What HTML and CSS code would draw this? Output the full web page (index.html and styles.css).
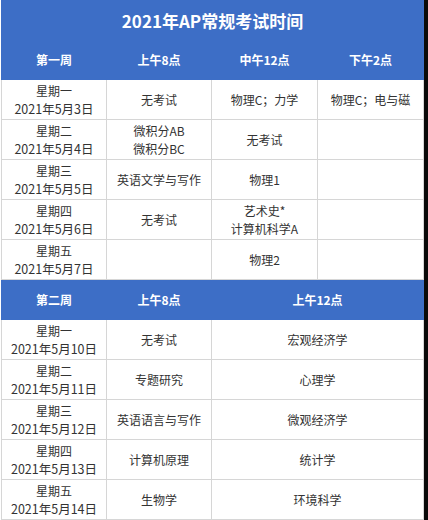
FILE: index.html
```html
<!DOCTYPE html>
<html lang="zh-CN">
<head>
<meta charset="utf-8">
<title>2021年AP常规考试时间</title>
<link rel="stylesheet" href="styles.css">
</head>
<body>
<div class="page">
  <table class="sched">
    <colgroup>
      <col class="c1"><col class="c2"><col class="c3"><col class="c4">
    </colgroup>
    <tr class="title"><th colspan="4">2021年AP常规考试时间</th></tr>
    <tr class="head first"><th>第一周</th><th>上午8点</th><th>中午12点</th><th>下午2点</th></tr>
    <tr><td>星期一<br><span class="d">2021年5月3日</span></td><td>无考试</td><td>物理C；力学</td><td>物理C；电与磁</td></tr>
    <tr><td>星期二<br><span class="d">2021年5月4日</span></td><td>微积分AB<br>微积分BC</td><td>无考试</td><td></td></tr>
    <tr><td>星期三<br><span class="d">2021年5月5日</span></td><td>英语文学与写作</td><td>物理1</td><td></td></tr>
    <tr><td>星期四<br><span class="d">2021年5月6日</span></td><td>无考试</td><td>艺术史*<br>计算机科学A</td><td></td></tr>
    <tr><td>星期五<br><span class="d">2021年5月7日</span></td><td></td><td>物理2</td><td></td></tr>
    <tr class="head"><th>第二周</th><th>上午8点</th><th colspan="2">上午12点</th></tr>
    <tr><td>星期一<br><span class="d">2021年5月10日</span></td><td>无考试</td><td colspan="2">宏观经济学</td></tr>
    <tr><td>星期二<br><span class="d">2021年5月11日</span></td><td>专题研究</td><td colspan="2">心理学</td></tr>
    <tr><td>星期三<br><span class="d">2021年5月12日</span></td><td>英语语言与写作</td><td colspan="2">微观经济学</td></tr>
    <tr><td>星期四<br><span class="d">2021年5月13日</span></td><td>计算机原理</td><td colspan="2">统计学</td></tr>
    <tr><td>星期五<br><span class="d">2021年5月14日</span></td><td>生物学</td><td colspan="2">环境科学</td></tr>
  </table>
  <div class="edge"></div>
</div>
</body>
</html>
```

FILE: styles.css
```css
html, body {
  margin: 0;
  padding: 0;
  background: #ffffff;
}
.page {
  display: flex;
  align-items: flex-start;
  width: 428px;
  height: 520px;
  overflow: hidden;
}
.sched {
  margin-left: 1px;
  width: 422px;
  flex: 0 0 422px;
  border-collapse: collapse;
  table-layout: fixed;
  font-family: "Liberation Sans Narrow", "Noto Sans CJK SC", sans-serif;
  font-size: 12px;
  color: #333333;
}
.c1 { width: 105px; }
.c2 { width: 105px; }
.c3 { width: 106px; }
.c4 { width: 106px; }
.sched tr {
  height: 40px;
}
.sched tr.first {
  height: 39px;
}
.sched th, .sched td {
  padding: 0;
  text-align: center;
  vertical-align: middle;
  line-height: 18px;
}
.sched td {
  border: 1px solid #d6d6d6;
}
.sched td .d {
  font-size: 12.5px;
}
.sched th {
  background: #3d6ec6;
  color: #ffffff;
  font-weight: bold;
  border: 1px solid #3d6ec6;
  font-family: "Noto Sans CJK SC", sans-serif;
  font-size: 12px;
}
.title th {
  font-size: 17px;
  line-height: 22px;
}
.edge {
  flex: 1 1 auto;
  align-self: stretch;
  background: #0a0a0a;
}
```
